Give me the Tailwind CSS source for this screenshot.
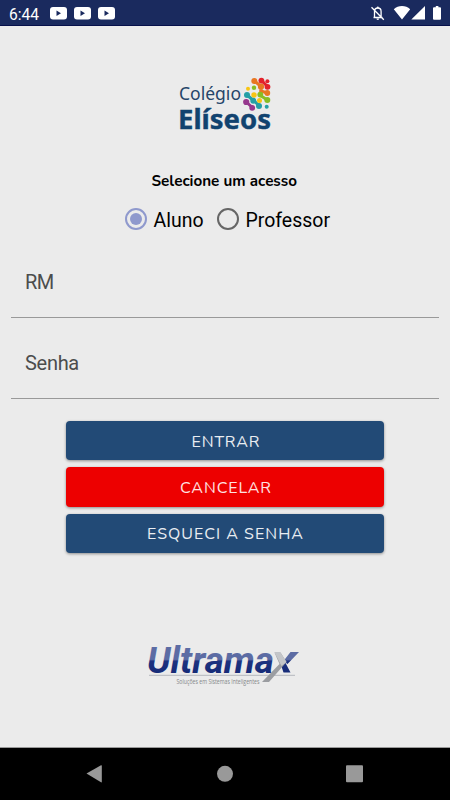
<!DOCTYPE html>
<html lang="pt-BR">
<head>
<meta charset="utf-8">
<meta name="viewport" content="width=device-width">
<title>Login</title>
<script src="https://cdn.jsdelivr.net/npm/@tailwindcss/browser@4"></script>
</head>
<body class="w-[450px] h-[800px] overflow-hidden bg-[#ebebeb] flex flex-col font-[Roboto,sans-serif]">
<header class="h-[26px] shrink-0 bg-[#1a2a5e] border-b border-[#06104a] text-white">
<svg class="block" width="450" height="25" viewBox="0 0 450 25" fill="#fff">
<text x="9" y="19.500" font-size="16" textLength="30" lengthAdjust="spacingAndGlyphs">6:44</text>
<g id="yt"><rect x="50" y="7" width="17" height="12.5" rx="3"/><path d="M56.5 10.5v5.4l4.5-2.7z" fill="#1a2a5e"/></g>
<use href="#yt" x="24"/><use href="#yt" x="48"/>
<g fill="none" stroke="#fff" stroke-width="1.3"><path d="M373.5 17.5h9M374.5 17v-5.5c0-2.5 1.5-3.5 3.3-3.5s3.3 1 3.3 3.5V17M371.5 7.2l12.3 12.6"/></g>
<circle cx="377.8" cy="7.5" r="1"/><path d="M376.4 18.6h2.8q0 1.4-1.4 1.4t-1.4-1.4z"/>
<path d="M402 19.5L393.8 9.3Q397.3 6 402 6t8.2 3.3zM425 6v13.500h-13.700zM435.800 6h2.600v1.300h1.600q1 0 1 1v10.200q0 1.300-1 1.300h-6q-1 0-1-1V8.300q0-1 1-1h1.800z"/>
</svg>
</header>
<main class="flex-1 flex flex-col items-center px-[11px]">
<svg class="block mt-11 shrink-0" width="110" height="70" viewBox="170 70 110 70" role="img" aria-label="Colégio Elíseos">
<text x="179" y="100" font-family="Noto Sans" font-size="18.500" fill="#254569" textLength="62" lengthAdjust="spacingAndGlyphs">Colégio</text>
<text x="178" y="129" font-family="Noto Sans" font-weight="700" font-size="27" fill="#11436f" stroke="#11436f" stroke-width=".4" textLength="93" lengthAdjust="spacingAndGlyphs">Elíseos</text>
<g stroke-width="3" stroke-linecap="round">
<path stroke="#e87722" d="M254.500 81l6.500 5.500M261 91l6.300 2"/><path stroke="#e3212b" d="M261.500 80.500l6 6"/>
<path stroke="#25a0a5" d="M247 95l6.500 5.500 5.500 5"/><path stroke="#88bd24" d="M260.500 95.500l6.800 4.500"/><path stroke="#96378d" d="M246.300 102l6 5.500"/>
</g>
<g fill="#e87722"><circle cx="254.300" cy="81" r="3"/><circle cx="261" cy="86.700" r="3.100"/><circle cx="261" cy="91" r="1.800"/><circle cx="267.300" cy="93" r="2.900"/></g>
<g fill="#e3212b"><circle cx="261.400" cy="80.600" r="2.900"/><circle cx="267.400" cy="81.300" r="2"/><circle cx="267.500" cy="86.800" r="2.900"/></g>
<g fill="#f8c513"><circle cx="248" cy="88.700" r="2"/><circle cx="254" cy="95" r="2.700"/><circle cx="259.500" cy="100.500" r="2.500"/></g>
<g fill="#88bd24"><circle cx="254" cy="87.700" r="2.200"/><circle cx="260.300" cy="94.600" r="2.900"/><circle cx="267.300" cy="100" r="3"/></g>
<g fill="#25a0a5"><circle cx="247" cy="95" r="3"/><circle cx="253.300" cy="100.700" r="3"/><circle cx="259" cy="106" r="3"/><circle cx="266.700" cy="106.800" r="2"/></g>
<g fill="#96378d"><circle cx="246.200" cy="102" r="3.100"/><circle cx="252.200" cy="107.800" r="2.900"/></g>
</svg>
<svg class="block mt-[30px] shrink-0" width="150" height="20" viewBox="0 0 150 20"><text x="1.500" y="15.500" font-family="Nunito, Open Sans" font-weight="700" font-size="15" textLength="145.500" lengthAdjust="spacingAndGlyphs">Selecione um acesso</text></svg>
<div class="mt-[13px] h-8 flex items-center self-start pl-[114px] text-[20px] leading-8 text-[#0b0b0b]">
<span class="w-[22px] h-[22px] rounded-full border-2 border-[#8f99cd] flex items-center justify-center"><span class="w-[12px] h-[12px] rounded-full bg-[#8f99cd]"></span></span>
<svg class="ml-1.5" width="52" height="32" viewBox="0 0 52 32"><text x="0.500" y="23.500" font-size="20" textLength="50" lengthAdjust="spacingAndGlyphs">Aluno</text></svg>
<span class="ml-3 w-[22px] h-[22px] rounded-full border-2 border-[#666]"></span>
<svg class="ml-1.5" width="88" height="32" viewBox="0 0 88 32"><text x="0.500" y="23.500" font-size="20" textLength="84.500" lengthAdjust="spacingAndGlyphs">Professor</text></svg>
</div>
<div class="self-stretch mt-[10px] h-[73px] border-b border-[#999] pl-[14px] pt-[23px] text-[20px] leading-[28px] text-[#4b4d4d] tracking-[-0.500px]">RM</div>
<div class="self-stretch mt-[8px] h-[73px] border-b border-[#999] pl-[14px] pt-[23px] text-[20px] leading-[28px] text-[#4b4d4d] tracking-[-0.300px]">Senha</div>
<div class="mt-[22px] w-[318px] flex flex-col gap-[7px]">
<button class="h-[39.400px] rounded bg-[#224a76] shadow-[0_1px_3px_#0006] flex items-center justify-center"><svg width="180" height="24" viewBox="0 0 180 24" fill="#e9edf2"><text x="56.500" y="17.500" font-family="Nunito, Lato" font-size="16" textLength="68">ENTRAR</text></svg></button>
<button class="h-[39.400px] rounded bg-[#ed0000] shadow-[0_1px_3px_#0006] flex items-center justify-center"><svg width="180" height="24" viewBox="0 0 180 24" fill="#ffe2e2"><text x="45" y="17.500" font-family="Nunito, Lato" font-size="16" textLength="91">CANCELAR</text></svg></button>
<button class="h-[39.400px] rounded bg-[#224a76] shadow-[0_1px_3px_#0006] flex items-center justify-center"><svg width="180" height="24" viewBox="0 0 180 24" fill="#e9edf2"><text x="12" y="17.500" font-family="Nunito, Lato" font-size="16" textLength="156">ESQUECI A SENHA</text></svg></button>
</div>
<svg class="block mt-[82px] shrink-0" width="170" height="60" viewBox="140 635 170 60" role="img" aria-label="Ultramax">
<defs><linearGradient id="b" gradientUnits="userSpaceOnUse" x1="0" y1="645" x2="0" y2="675"><stop offset="0" stop-color="#5c6ca4"/><stop offset=".48" stop-color="#5c6ca4"/><stop offset=".54" stop-color="#1c3280"/><stop offset="1" stop-color="#152a76"/></linearGradient></defs>
<path d="M149 675.300h146" stroke="#b5b7bd"/>
<text x="147" y="672.500" font-size="36" font-weight="700" font-style="italic" fill="url(#b)" textLength="127" lengthAdjust="spacingAndGlyphs">Ultrama</text>
<path d="M290.500 652h8.500L287.500 664l-4-3zM281 665l4-3 5.500 10.500h-7z" fill="url(#b)"/>
<path d="M274.500 652.500h6l6 9.500-17.500 20h-7l17.500-18z" fill="#9b9da1"/><path d="M274.500 652.500h6l6 9.500-5 4z" fill="#c4c6c9"/>
<text x="176.500" y="683.500" font-size="6.500" font-family="Open Sans" fill="#858789" textLength="83" lengthAdjust="spacingAndGlyphs">Soluções em Sistemas Inteligentes</text>
</svg>
</main>
<nav class="h-[53px] shrink-0 bg-black border-t border-[#999]">
<svg class="block" width="450" height="52" viewBox="0 748 450 52" fill="#999"><path d="M86.500 773.500l14.500-8.300q.8-.3.800.6v16q0 .8-.8.500z"/><circle cx="225" cy="773.800" r="8"/><rect x="346" y="765.300" width="17" height="17" rx="1"/></svg>
</nav>
</body>
</html>
